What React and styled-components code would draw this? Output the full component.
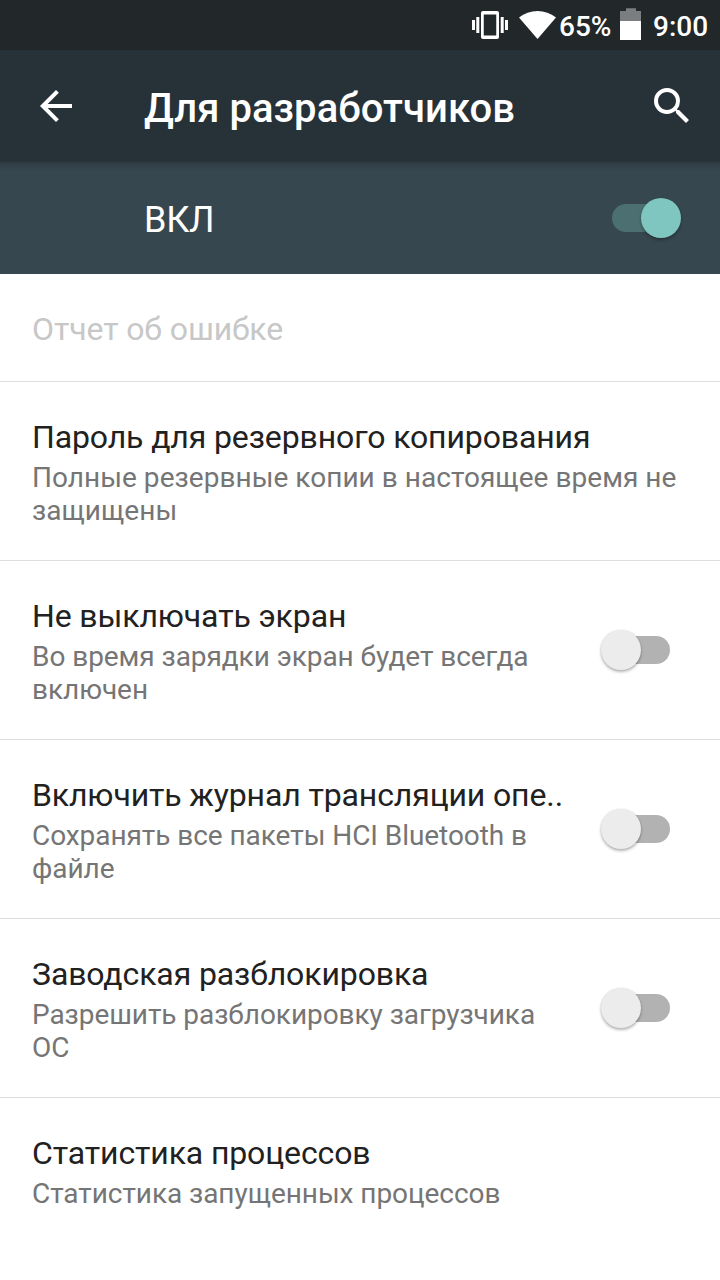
import React, { useState } from 'react'
import styled, { createGlobalStyle } from 'styled-components'

const options = [
   { id: 'bugreport', title: 'Отчет об ошибке', disabled: true },
   {
      id: 'backup',
      title: 'Пароль для резервного копирования',
      summary: 'Полные резервные копии в настоящее время не защищены',
      tracking: 0.04
   },
   { id: 'awake', title: 'Не выключать экран', summary: 'Во время зарядки экран будет всегда включен', toggle: true },
   { id: 'hci', title: 'Включить журнал трансляции опе..', summary: 'Сохранять все пакеты HCI Bluetooth в файле', toggle: true },
   { id: 'oem', title: 'Заводская разблокировка', summary: 'Разрешить разблокировку загрузчика ОС', toggle: true },
   { id: 'stats', title: 'Статистика процессов', summary: 'Статистика запущенных процессов' }
]

const VibrateIcon = () => (
   <svg width="36" height="28" viewBox="0 0 36 28" fill="#fff">
      <path d="M0 9h3v10H0zM4.300 6h3v16h-3zM28.700 6h3v16h-3zM33 9h3v10h-3z" />
      <path fillRule="evenodd" d="M11 0h14a2 2 0 0 1 2 2v24a2 2 0 0 1-2 2H11a2 2 0 0 1-2-2V2a2 2 0 0 1 2-2zm.75 3.500v21h12.500v-21z" />
   </svg>
)

const WifiIcon = () => (
   <svg width="37" height="28" viewBox="0 0 37 28" fill="#fff">
      <path d="M0 6.400C5.300 2.300 11.600 0 18.500 0S31.700 2.300 37 6.400L18.500 28z" />
   </svg>
)

const BatteryIcon = () => (
   <svg width="21" height="34" viewBox="0 0 21 34">
      <path fill="#7b7e80" d="M6 .3h10v2.700h5v10H0V3h6z" />
      <path fill="#fff" d="M0 13h21v19H0z" />
   </svg>
)

const BackIcon = () => (
   <svg width="48" height="48" viewBox="0 0 24 24" fill="#fff">
      <path d="M20 11H7.830l5.590-5.590L12 4l-8 8 8 8 1.410-1.410L7.830 13H20z" />
   </svg>
)

const SearchIcon = () => (
   <svg width="48" height="48" viewBox="0 0 24 24" fill="#fff">
      <path d="M15.500 14h-.79l-.28-.27A6.470 6.470 0 0 0 16 9.500 6.500 6.500 0 1 0 9.500 16c1.610 0 3.090-.59 4.230-1.570l.27.28v.79l5 4.990L20.490 19zm-6 0C7.010 14 5 11.990 5 9.500S7.010 5 9.500 5 14 7.010 14 9.500 11.990 14 9.500 14z" />
   </svg>
)

const Switch = ({ on, onClick }) => (
   <SwitchTrack type="button" role="switch" aria-checked={on} $on={on} onClick={onClick}>
      <SwitchThumb $on={on} />
   </SwitchTrack>
)

const Option = ({ title, summary, tracking, disabled, toggle }) => {
   const [on, setOn] = useState(false)
   return (
      <Row $single={!summary} $toggle={toggle}>
         <RowText>
            <RowTitle $disabled={disabled}>{title}</RowTitle>
            {!!summary && <RowSummary $tracking={tracking}>{summary}</RowSummary>}
         </RowText>
         {toggle && <Switch on={on} onClick={() => setOn(!on)} />}
      </Row>
   )
}

const App = () => {
   const [enabled, setEnabled] = useState(true)
   return (
      <Screen>
         <GlobalStyle />
         <StatusBar>
            <VibrateIcon />
            <WifiIcon />
            <BatteryLevel>65%</BatteryLevel>
            <BatteryIcon />
            <Clock>9:00</Clock>
         </StatusBar>
         <AppBar>
            <BackIcon />
            <AppTitle>Для разработчиков</AppTitle>
            <SearchIcon />
         </AppBar>
         <MasterBar>
            <MasterLabel>{enabled ? 'ВКЛ' : 'ВЫКЛ'}</MasterLabel>
            <Switch on={enabled} onClick={() => setEnabled(!enabled)} />
         </MasterBar>
         <List>
            {options.map(option => (
               <Option key={option.id} {...option} />
            ))}
         </List>
      </Screen>
   )
}

export default App

const GlobalStyle = createGlobalStyle`
   * {
      box-sizing: border-box;
   }

   body {
      margin: 0;
      background: #fff;
      font-family: Roboto, sans-serif;
   }

   svg {
      display: block;
      flex: none;
   }
`

const Screen = styled.div`
   display: flex;
   flex-direction: column;
   width: 720px;
   height: 1280px;
   overflow: hidden;
   background: #fff;
`

const StatusBar = styled.div`
   display: flex;
   flex: none;
   align-items: center;
   justify-content: flex-end;
   height: 50px;
   padding-right: 12px;
   background: #22272a;
   color: #fff;
   font-size: 28px;
   font-weight: 500;
   line-height: 34px;

   svg + svg {
      margin-left: 11px;
   }
`

const BatteryLevel = styled.span`
   width: 53px;
   margin: 3px 8px 0 3px;
   white-space: nowrap;
`

const Clock = styled.span`
   width: 55px;
   margin: 3px 0 0 12px;
   white-space: nowrap;
`

const AppBar = styled.header`
   display: flex;
   flex: none;
   align-items: center;
   height: 112px;
   padding: 0 24px 0 32px;
   background: #273238;
`

const AppTitle = styled.h1`
   flex: 1;
   margin: 6px 0 0 64px;
   color: #fff;
   font-size: 40px;
   font-weight: 500;
   letter-spacing: 0.05px;
   line-height: 48px;
   white-space: nowrap;
`

const MasterBar = styled.div`
   display: flex;
   flex: none;
   align-items: center;
   justify-content: space-between;
   height: 112px;
   padding: 0 50px 0 144px;
   background: linear-gradient(#2c383e, #33424a 4px, #37474f 9px);
`

const MasterLabel = styled.span`
   margin-top: 3px;
   color: #fff;
   font-size: 36px;
   letter-spacing: -0.3px;
   line-height: 42px;
`

const SwitchTrack = styled.button`
   display: flex;
   flex: none;
   align-items: center;
   justify-content: ${({ $on }) => ($on ? 'flex-end' : 'flex-start')};
   width: 58px;
   height: 28px;
   padding: 0;
   border: 0;
   border-radius: 14px;
   background: ${({ $on }) => ($on ? '#4c6f71' : '#b2b2b2')};
`

const SwitchThumb = styled.span`
   flex: none;
   width: 40px;
   height: 40px;
   margin: 0 -11px;
   border-radius: 50%;
   background: ${({ $on }) => ($on ? '#80c6c0' : '#ececec')};
   box-shadow: 0 2px 3px rgba(0, 0, 0, 0.28), 0 0 2px rgba(0, 0, 0, 0.12);
`

const List = styled.main`
   display: flex;
   flex-direction: column;
`

const Row = styled.section`
   display: flex;
   flex: none;
   align-items: center;
   gap: 60px;
   height: ${({ $single }) => ($single ? 108 : 179)}px;
   padding: 0 ${({ $toggle }) => ($toggle ? 50 : 32)}px 0 32px;
   border-bottom: 1px solid #dedede;

   &:last-child {
      border-bottom: 0;
   }
`

const RowText = styled.div`
   flex: 1;
   align-self: flex-start;
   min-width: 0;
   padding-top: 36px;
`

const RowTitle = styled.h2`
   margin: 0;
   color: ${({ $disabled }) => ($disabled ? '#c7c7c7' : '#212121')};
   font-size: 32px;
   font-weight: 400;
   letter-spacing: -0.12px;
   line-height: 38px;
   white-space: nowrap;
`

const RowSummary = styled.p`
   margin: 5px 0 0;
   color: #757575;
   font-size: 28px;
   letter-spacing: ${({ $tracking = -0.06 }) => $tracking}px;
   line-height: 33px;
`
